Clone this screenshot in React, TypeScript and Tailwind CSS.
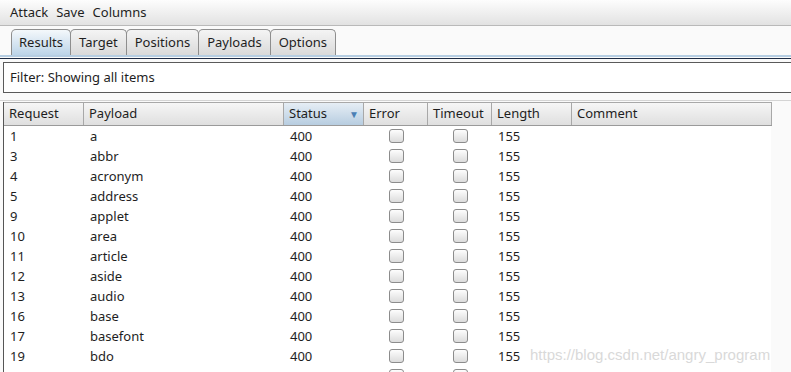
import { Fragment } from 'react';

const rows: Array<[string, string]> = [
  ['1', 'a'],
  ['3', 'abbr'],
  ['4', 'acronym'],
  ['5', 'address'],
  ['9', 'applet'],
  ['10', 'area'],
  ['11', 'article'],
  ['12', 'aside'],
  ['13', 'audio'],
  ['16', 'base'],
  ['17', 'basefont'],
  ['19', 'bdo'],
];

const tabs = ['Results', 'Target', 'Positions', 'Payloads', 'Options'];

const columns = [
  { name: 'Request', w: 'w-[80px]' },
  { name: 'Payload', w: 'w-[200px]' },
  { name: 'Status', w: 'w-[80px]' },
  { name: 'Error', w: 'w-[64px]' },
  { name: 'Timeout', w: 'w-[64px]' },
  { name: 'Length', w: 'w-[80px]' },
  { name: 'Comment', w: 'w-[200px]' },
];

function Check() {
  return (
    <div className="h-[14px] w-[15px] rounded-[3px] border border-[#8c8c8c] bg-gradient-to-b from-[#fdfdfd] to-[#dcdcdc]" />
  );
}

export default function App() {
  return (
    <div
      className="relative h-[372px] w-[791px] overflow-hidden bg-[#fafafa] text-[13px] text-[#1e1e1e]"
      style={{ fontFamily: '"Noto Sans", "Open Sans", sans-serif' }}
    >
      {/* menu */}
      <div className="flex h-[26px] items-center gap-[8px] border-b border-[#b9b9b9] bg-gradient-to-b from-[#fdfdfd] to-[#e2e2e2] pl-[10px]">
        <span>Attack</span>
        <span>Save</span>
        <span>Columns</span>
      </div>

      {/* tabs */}
      <div className="flex h-[29px] items-end pl-[11px]">
        {tabs.map((t, i) => (
          <div
            key={t}
            className={
              'flex h-[26px] items-center rounded-t-[5px] border border-b-0 border-[#8e8e8e] ' +
              (i === 0
                ? 'bg-gradient-to-b from-[#f4f8fb] to-[#bcd4e8] px-[7px]'
                : 'bg-gradient-to-b from-[#f4f4f4] to-[#dadada] px-[8px]') +
              (i > 0 ? ' -ml-px' : '')
            }
          >
            {t}
          </div>
        ))}
      </div>
      <div className="h-[2px] bg-[#b5cde2]" />
      <div className="h-[1px] bg-[#fafafa]" />
      <div className="h-[1px] bg-[#1d2b45]" />

      {/* filter */}
      <div className="pl-[3px] pt-[3px]">
        <div className="flex h-[31px] w-[800px] items-center border border-[#5a5a5a] bg-white pl-[6px]">
          Filter: Showing all items
        </div>
      </div>

      {/* table */}
      <div className="mt-[7px] border-t border-[#d4d4d4] pt-[1px]">
        <div className="ml-[3px] flex w-[768px] border-l border-[#555] bg-white">
          <div className="flex flex-col">
            <div className="flex h-[24px] border-b border-[#9a9a9a]">
              {columns.map((c) => (
                <div
                  key={c.name}
                  className={
                    c.w +
                    ' flex items-center justify-between border-r border-t border-[#a8a8a8] pl-[5px] pr-[4px] ' +
                    (c.name === 'Status'
                      ? 'bg-gradient-to-b from-[#e6eef5] to-[#b7cde0]'
                      : 'bg-gradient-to-b from-[#f6f6f6] to-[#dfdfdf]')
                  }
                >
                  <span>{c.name}</span>
                  {c.name === 'Status' ? (
                    <span className="text-[10px] text-[#4a7fb5]">▼</span>
                  ) : null}
                </div>
              ))}
            </div>
            <div className="grid grid-cols-[80px_200px_80px_64px_64px_80px_200px] grid-rows-[repeat(13,20px)]">
              {rows.map(([req, payload]) => (
                <Fragment key={req}>
                  <div className="flex items-center pl-[6px] pt-[2px]">{req}</div>
                  <div className="flex items-center pl-[6px] pt-[2px]">{payload}</div>
                  <div className="flex items-center pl-[6px] pt-[2px]">400</div>
                  <div className="flex items-center justify-center">
                    <Check />
                  </div>
                  <div className="flex items-center justify-center">
                    <Check />
                  </div>
                  <div className="flex items-center pl-[6px] pt-[2px]">155</div>
                  <div />
                </Fragment>
              ))}
              {/* next row, only its checkboxes peek in */}
              <div />
              <div />
              <div />
              <div className="flex items-center justify-center">
                <Check />
              </div>
              <div className="flex items-center justify-center">
                <Check />
              </div>
              <div />
              <div />
            </div>
          </div>
        </div>
      </div>

      {/* watermark */}
      <div
        className="absolute left-[530px] top-[344px] text-[15px] text-[#d9d9d9]"
        style={{ fontFamily: '"Liberation Sans", Arial, sans-serif' }}
      >
        https://blog.csdn.net/angry_program
      </div>
    </div>
  );
}
